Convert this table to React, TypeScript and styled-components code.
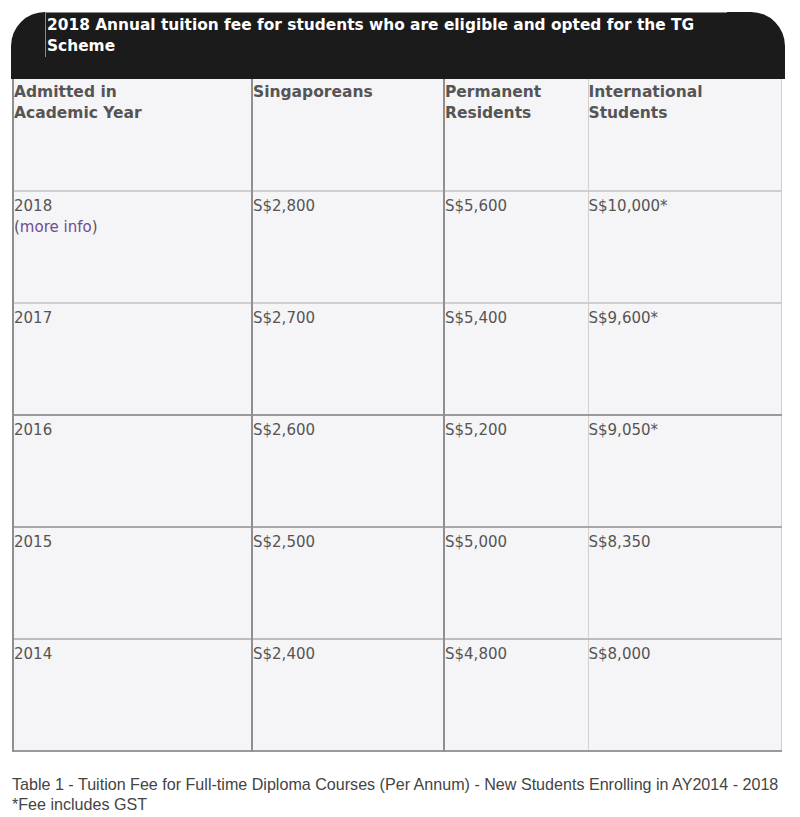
import React from "react";
import styled, { createGlobalStyle } from "styled-components";

const GlobalStyle = createGlobalStyle`
  html, body { margin: 0; padding: 0; background: #ffffff; }
  body { width: 800px; height: 817px; overflow: hidden; }
`;

const Page = styled.div`
  padding: 12px 15px 0 11px;
  display: flex;
  flex-direction: column;
`;

const TitleBand = styled.div`
  background: #1b1b1b;
  border-radius: 34px 34px 0 0;
  height: 67px;
  width: 774px;
  padding-left: 34px;
  box-sizing: border-box;
`;

const TitleText = styled.div`
  border-left: 1px solid #8a8a8a;
  border-top: 1px solid #8a8a8a;
  padding: 2px 0 0 1px;
  width: 680px;
  color: #ffffff;
  font-family: "DejaVu Sans", Verdana, sans-serif;
  font-weight: bold;
  font-size: 15.4px;
  line-height: 21px;
`;

const Table = styled.table`
  margin-left: 1px;
  width: 768px;
  border-collapse: collapse;
  table-layout: fixed;
  background: #f5f4f7;
  font-family: "DejaVu Sans", Verdana, sans-serif;
  color: #555555;
`;

const Col = styled.col<{ $w: number }>`
  width: ${(p) => p.$w}px;
`;

const Row = styled.tr<{ $line: string }>`
  height: 112px;
  border-bottom: 2px solid ${(p) => p.$line};
`;

const HeadCell = styled.th<{ $dark?: boolean }>`
  text-align: left;
  vertical-align: top;
  font-weight: bold;
  font-size: 15.5px;
  line-height: 21px;
  padding: 3px 1px 0 0;
  border-left: ${(p) => (p.$dark ? "2px solid #8f8f8f" : "1px solid #c4c4c4")};
  border-right: 1px solid #d0d0d0;
  overflow: hidden;
`;

const Cell = styled.td<{ $dark?: boolean }>`
  vertical-align: top;
  font-size: 15px;
  line-height: 21px;
  padding: 4px 1px 0 0;
  border-left: ${(p) => (p.$dark ? "2px solid #8f8f8f" : "1px solid #c4c4c4")};
  border-right: 1px solid #d0d0d0;
  overflow: hidden;
`;

const MoreInfo = styled.a`
  color: #6b4f8f;
  text-decoration: none;
  span { color: #555555; }
`;

const Caption = styled.div`
  margin-top: 22px;
  margin-left: 1px;
  font-family: "Liberation Sans", Arial, sans-serif;
  font-size: 16.1px;
  line-height: 20px;
  color: #444444;
  white-space: nowrap;
`;

const rows = [
  { year: "2018", sg: "S$2,800", pr: "S$5,600", intl: "S$10,000*", line: "#cfcfcf", more: true },
  { year: "2017", sg: "S$2,700", pr: "S$5,400", intl: "S$9,600*", line: "#9a9a9a" },
  { year: "2016", sg: "S$2,600", pr: "S$5,200", intl: "S$9,050*", line: "#a8a8a8" },
  { year: "2015", sg: "S$2,500", pr: "S$5,000", intl: "S$8,350", line: "#bdbdbd" },
  { year: "2014", sg: "S$2,400", pr: "S$4,800", intl: "S$8,000", line: "#9a9a9a" },
];

export default function App() {
  return (
    <>
      <GlobalStyle />
      <Page>
        <TitleBand>
          <TitleText>
            2018 Annual tuition fee for students who are eligible and opted for the TG Scheme
          </TitleText>
        </TitleBand>
        <Table>
          <colgroup>
            <Col $w={239} />
            <Col $w={192} />
            <Col $w={144} />
            <Col $w={193} />
          </colgroup>
          <thead>
            <Row $line="#cfcfcf">
              <HeadCell $dark>
                Admitted in
                <br />
                Academic Year
              </HeadCell>
              <HeadCell $dark>Singaporeans</HeadCell>
              <HeadCell $dark>
                Permanent
                <br />
                Residents
              </HeadCell>
              <HeadCell>
                International
                <br />
                Students
              </HeadCell>
            </Row>
          </thead>
          <tbody>
            {rows.map((r) => (
              <Row key={r.year} $line={r.line}>
                <Cell $dark>
                  {r.year}
                  {r.more && (
                    <>
                      <br />
                      <MoreInfo href="#">
                        <span>(</span>more info<span>)</span>
                      </MoreInfo>
                    </>
                  )}
                </Cell>
                <Cell $dark>{r.sg}</Cell>
                <Cell $dark>{r.pr}</Cell>
                <Cell>{r.intl}</Cell>
              </Row>
            ))}
          </tbody>
        </Table>
        <Caption>
          Table 1 - Tuition Fee for Full-time Diploma Courses (Per Annum) - New Students Enrolling in AY2014 - 2018
          <br />
          *Fee includes GST
        </Caption>
      </Page>
    </>
  );
}
